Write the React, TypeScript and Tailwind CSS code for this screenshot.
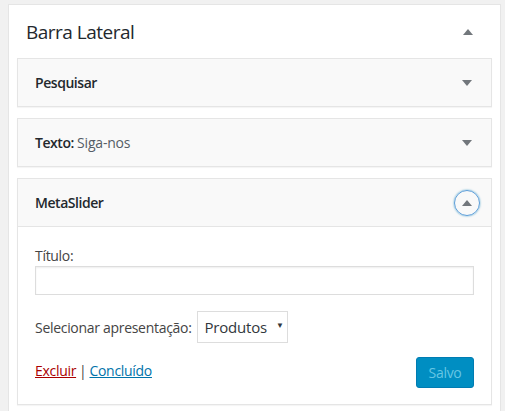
import type { ReactNode } from 'react'

const font = { fontFamily: '"Open Sans", "Noto Sans", sans-serif' }

function Arrow({ up = false }: { up?: boolean }) {
  return (
    <svg width="10" height="6" viewBox="0 0 10 6" className="block">
      <path d={up ? 'M0 6 L5 0 L10 6 Z' : 'M0 0 L10 0 L5 6 Z'} fill="#72777c" />
    </svg>
  )
}

function WidgetHead({ children, open = false }: { children: ReactNode; open?: boolean }) {
  return (
    <div className="flex h-[47px] items-center justify-between pl-[17px] pr-[11px]">
      <h3 className="text-[14px] font-semibold tracking-[-0.45px] text-[#23282d]">{children}</h3>
      <span
        className={
          open
            ? 'flex h-[26px] w-[26px] items-center justify-center rounded-full border border-[#5b9dd9] shadow-[0_0_2px_rgba(30,140,190,0.8)]'
            : 'flex h-[26px] w-[26px] items-center justify-center'
        }
      >
        <Arrow up={open} />
      </span>
    </div>
  )
}

export default function App() {
  return (
    <div className="h-[411px] overflow-hidden bg-[#f1f1f1] pl-[8px] pr-[4px] pt-[4px]" style={font}>
      <div className="h-full border border-b-0 border-[#e5e5e5] bg-white px-[8px]">
        <div className="flex h-[53px] items-center justify-between pl-[9px] pr-[11px] pt-[1px]">
          <h2 className="text-[19px] tracking-[-0.5px] text-[#23282d]">Barra Lateral</h2>
          <span className="flex w-[26px] justify-center">
            <Arrow up />
          </span>
        </div>

        <div className="flex flex-col gap-[11px]">
          <div className="border border-[#e5e5e5] bg-[#f9f9f9] shadow-[0_1px_1px_rgba(0,0,0,0.04)]">
            <WidgetHead>Pesquisar</WidgetHead>
          </div>

          <div className="border border-[#e5e5e5] bg-[#f9f9f9] shadow-[0_1px_1px_rgba(0,0,0,0.04)]">
            <WidgetHead>
              Texto:{' '}
              <span className="font-normal tracking-[-0.2px] text-[#555d66]">Siga-nos</span>
            </WidgetHead>
          </div>

          <div className="border border-[#e5e5e5] bg-[#f9f9f9] shadow-[0_1px_1px_rgba(0,0,0,0.04)]">
            <WidgetHead open>MetaSlider</WidgetHead>
            <div className="border-t border-[#e5e5e5] bg-white px-[17px] pb-[16px] pt-[20px] text-[14px] tracking-[-0.3px] text-[#444]">
              <label className="block leading-[18px]">Título:</label>
              <input className="mt-[1px] block h-[29px] w-full border border-[#ddd] shadow-[inset_0_1px_2px_rgba(0,0,0,0.07)] outline-none" />

              <div className="mt-[16px] flex h-[32px] items-center gap-[5px]">
                <span>Selecionar apresentação:</span>
                <div className="flex h-[32px] w-[91px] items-center border border-[#ddd] pl-[7px] text-[15px] tracking-[-0.2px] text-[#32373c]">
                  <span>Produtos</span>
                  <span className="ml-[9px] mb-[4px] text-[8px] leading-none">▼</span>
                </div>
              </div>

              <div className="mt-[14px] flex items-start justify-between">
                <div className="pt-[3px]">
                  <a className="text-[#a00] underline">Excluir</a>
                  <span className="mx-[3px]">|</span>
                  <a className="text-[#0073aa] underline">Concluído</a>
                </div>
                <button className="h-[31px] w-[58px] rounded-[3px] border border-[#007cb2] bg-[#008ec2] text-[14px] text-[#66c6e4]">
                  Salvo
                </button>
              </div>
            </div>
          </div>
        </div>
      </div>
    </div>
  )
}
